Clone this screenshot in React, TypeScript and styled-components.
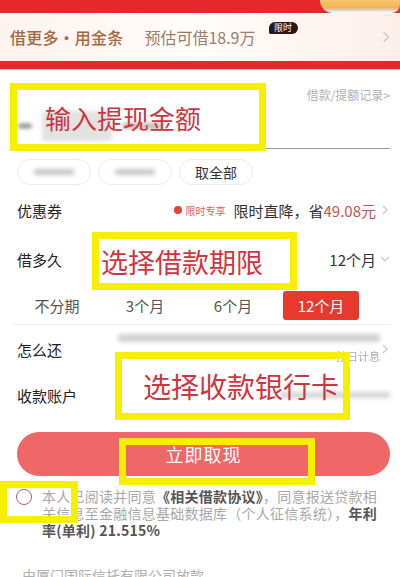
import React from 'react';
import styled, { createGlobalStyle } from 'styled-components';

const Global = createGlobalStyle`
  html, body { margin: 0; padding: 0; background: #fff; }
  body { font-family: "Noto Sans CJK SC", "Noto Sans", sans-serif; }
  * { box-sizing: border-box; }
`;

const Page = styled.div`
  position: relative;
  width: 400px;
  height: 577px;
  overflow: hidden;
  background: #fff;
`;

const Header = styled.div`
  position: relative;
  background: #e5282b;
  padding: 13px 0 8px;
  border-bottom: 1px solid #f3b9b5;
`;

const Coin = styled.div`
  position: absolute;
  right: 0;
  top: 0;
  width: 80px;
  height: 13px;
  background: linear-gradient(180deg, #f9c46b 0%, #f2b35a 60%, #d9d9d9 80%, #ffffff 100%);
  border-radius: 0 0 18px 28px;
`;

const Banner = styled.div`
  display: flex;
  align-items: center;
  height: 48px;
  padding: 0 8px 0 10px;
  background: linear-gradient(90deg, #fdf3ef 0%, #fffcfb 50%, #fcefea 100%);
`;

const BannerTitle = styled.span`
  font-size: 16px;
  font-weight: 500;
  color: #a5683f;
  letter-spacing: 0.2px;
`;

const BannerSub = styled.span`
  position: relative;
  margin-left: 21px;
  font-size: 16px;
  color: #9d7c6c;
`;

const Badge = styled.span`
  position: absolute;
  right: -42px;
  top: -3px;
  width: 29px;
  height: 12px;
  border-radius: 7px 7px 7px 2px;
  background: #2e1517;
  color: #fff;
  font-size: 9px;
  line-height: 12px;
  text-align: center;
`;

const Spacer = styled.div`
  flex: 1;
`;

const Chevron = styled.span<{ $size?: number; $color?: string }>`
  display: inline-flex;
  color: ${(p) => p.$color || '#c8c8c8'};
  svg { width: ${(p) => p.$size || 10}px; height: ${(p) => p.$size || 10}px; }
`;

const Body = styled.div`
  padding: 0 10px 0 17px;
`;

const LinkRow = styled.div`
  display: flex;
  justify-content: flex-end;
  margin-top: 17px;
  font-size: 12px;
  line-height: 16px;
  color: #b0b0b0;
`;

const AmountArea = styled.div`
  display: flex;
  align-items: center;
  gap: 10px;
  height: 46px;
  margin-left: -7px;
  padding-left: 8px;
  border-bottom: 1px solid #9a9a9a;
`;

const Blur = styled.span<{ $w: number; $h: number; $c?: string }>`
  display: inline-block;
  width: ${(p) => p.$w}px;
  height: ${(p) => p.$h}px;
  background: ${(p) => p.$c || '#cfcfcf'};
  filter: blur(2px);
  border-radius: 2px;
`;

const Chips = styled.div`
  display: flex;
  gap: 7px;
  margin-top: 10px;
`;

const Chip = styled.div`
  display: flex;
  align-items: center;
  justify-content: center;
  width: 74px;
  height: 26px;
  border: 1px solid #ececec;
  border-radius: 13px;
  font-size: 14px;
  color: #333;
`;

const Row = styled.div<{ $h?: number }>`
  display: flex;
  align-items: center;
  height: ${(p) => p.$h || 48}px;
`;

const Label = styled.span`
  font-size: 15px;
  color: #222;
`;

const Right = styled.div`
  display: flex;
  align-items: center;
  margin-left: auto;
  gap: 4px;
`;

const Dot = styled.span`
  width: 8px;
  height: 8px;
  border-radius: 50%;
  background: #e3403a;
`;

const Tiny = styled.span`
  font-size: 10px;
  color: #e0605a;
  margin-right: 4px;
`;

const Value = styled.span`
  font-size: 15px;
  color: #333;
`;

const RedValue = styled.span`
  font-size: 15px;
  color: #c8524e;
`;

const Tabs = styled.div`
  display: grid;
  grid-template-columns: repeat(4, 88px);
  margin-left: -4px;
  margin-top: 8px;
  padding-bottom: 4px;
  border-bottom: 1px solid #efefef;
`;

const Tab = styled.div<{ $active?: boolean }>`
  justify-self: center;
  width: 76px;
  height: 29px;
  display: flex;
  align-items: center;
  justify-content: center;
  font-size: 15px;
  border-radius: 3px;
  background: ${(p) => (p.$active ? '#e8392f' : 'transparent')};
  color: ${(p) => (p.$active ? '#fff' : '#555')};
`;

const RepayInfo = styled.div`
  display: flex;
  flex-direction: column;
  align-items: flex-end;
  gap: 6px;
  margin-left: auto;
`;

const SmallGrey = styled.span`
  font-size: 11px;
  color: #aaa;
  filter: blur(0.6px);
`;

const Button = styled.div`
  display: flex;
  align-items: center;
  justify-content: center;
  height: 44px;
  margin-top: 15px;
  border-radius: 22px;
  background: #ef6767;
  color: #fff;
  font-size: 18px;
  letter-spacing: 1px;
`;

const Agree = styled.div`
  display: flex;
  align-items: flex-start;
  gap: 10px;
  margin-top: 12px;
  margin-left: -1px;
`;

const Circle = styled.span`
  flex: none;
  width: 16px;
  height: 16px;
  margin-top: 1px;
  border-radius: 50%;
  border: 1.5px solid #a06565;
`;

const AgreeText = styled.p`
  margin: 0;
  width: 345px;
  font-size: 14px;
  line-height: 17px;
  color: #a8a8a8;
  letter-spacing: 0.25px;
  b { color: #555; font-weight: 600; }
`;

const Footer = styled.div`
  margin-top: 26px;
  margin-left: 5px;
  font-size: 14px;
  color: #b0b0b0;
`;

const Mark = styled.div<{ $l: number; $t: number; $w: number; $h: number }>`
  position: absolute;
  left: ${(p) => p.$l}px;
  top: ${(p) => p.$t}px;
  width: ${(p) => p.$w}px;
  height: ${(p) => p.$h}px;
  border: 7px solid #f6f000;
  display: flex;
  align-items: center;
`;

const MarkText = styled.span<{ $size: number; $pad: number }>`
  padding-left: ${(p) => p.$pad}px;
  font-size: ${(p) => p.$size}px;
  color: #cf3540;
  white-space: nowrap;
`;

const Right10 = () => (
  <svg viewBox="0 0 10 10" fill="none" stroke="currentColor" strokeWidth="1.2">
    <path d="M3 1 L7 5 L3 9" />
  </svg>
);

const Down10 = () => (
  <svg viewBox="0 0 10 10" fill="none" stroke="currentColor" strokeWidth="1.2">
    <path d="M1 3 L5 7 L9 3" />
  </svg>
);

export default function App() {
  return (
    <Page>
      <Global />
      <Header>
        <Coin />
        <Banner>
          <BannerTitle>借更多·用金条</BannerTitle>
          <BannerSub>
            预估可借18.9万
            <Badge>限时</Badge>
          </BannerSub>
          <Spacer />
          <Chevron $size={12}><Right10 /></Chevron>
        </Banner>
      </Header>
      <Body>
        <LinkRow>借款/提额记录&gt;</LinkRow>
        <AmountArea>
          <Blur $w={14} $h={4} $c="#777" />
          <Blur $w={70} $h={30} $c="#e2e2e2" />
          <Blur $w={40} $h={6} $c="#bbb" />
        </AmountArea>
        <Chips>
          <Chip><Blur $w={40} $h={6} $c="#c8c8c8" /></Chip>
          <Chip><Blur $w={40} $h={6} $c="#c8c8c8" /></Chip>
          <Chip>取全部</Chip>
        </Chips>
        <Row $h={50}>
          <Label>优惠券</Label>
          <Right>
            <Dot />
            <Tiny>限时专享</Tiny>
            <Value>限时直降，省<RedValue>49.08元</RedValue></Value>
            <Chevron><Right10 /></Chevron>
          </Right>
        </Row>
        <Row>
          <Label>借多久</Label>
          <Right>
            <Value>12个月</Value>
            <Chevron><Down10 /></Chevron>
          </Right>
        </Row>
        <Tabs>
          <Tab>不分期</Tab>
          <Tab>3个月</Tab>
          <Tab>6个月</Tab>
          <Tab $active>12个月</Tab>
        </Tabs>
        <Row>
          <Label>怎么还</Label>
          <RepayInfo>
            <Blur $w={262} $h={8} $c="#d0d0d0" />
            <SmallGrey>按日计息</SmallGrey>
          </RepayInfo>
          <Chevron><Right10 /></Chevron>
        </Row>
        <Row $h={44}>
          <Label>收款账户</Label>
          <Right>
            <Blur $w={110} $h={6} $c="#d4d4d4" />
          </Right>
        </Row>
        <Button>立即取现</Button>
        <Agree>
          <Circle />
          <AgreeText>
            本人已阅读并同意<b>《相关借款协议》</b>，同意报送贷款相关信息至金融信息基础数据库（个人征信系统），<b>年利率(单利) 21.515%</b>
          </AgreeText>
        </Agree>
        <Footer>由厦门国际信托有限公司放款</Footer>
      </Body>
      <Mark $l={10} $t={83} $w={256} $h={68}>
        <MarkText $size={26} $pad={28}>输入提现金额</MarkText>
      </Mark>
      <Mark $l={92} $t={232} $w={205} $h={58}>
        <MarkText $size={27} $pad={2}>选择借款期限</MarkText>
      </Mark>
      <Mark $l={115} $t={352} $w={235} $h={68}>
        <MarkText $size={28} $pad={21}>选择收款银行卡</MarkText>
      </Mark>
      <Mark $l={119} $t={438} $w={196} $h={47} />
      <Mark $l={0} $t={481} $w={78} $h={42} />
    </Page>
  );
}
